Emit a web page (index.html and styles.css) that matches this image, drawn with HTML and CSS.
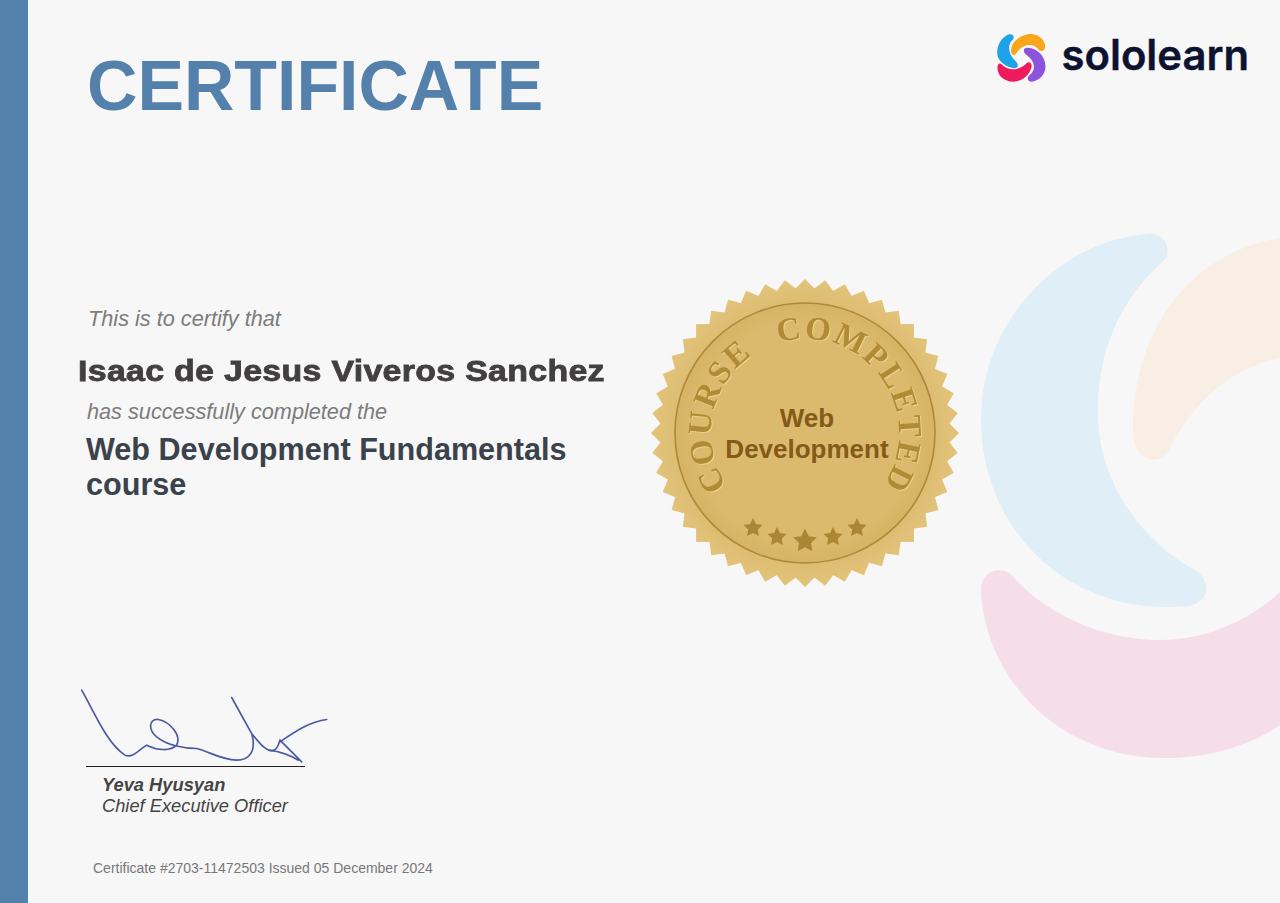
FILE: index.html
```html
<!DOCTYPE html>
<html lang="en">
<head>
<meta charset="utf-8">
<title>Certificate</title>
<link rel="stylesheet" href="styles.css">
</head>
<body>
<div class="page">
  <svg class="decor" viewBox="0 0 1280 903" aria-hidden="true">
    <path class="d-blue" d="M1148 234 C1162 232 1172 246 1166 258 C1160 266 1098 310 1098 412 C1098 490 1150 546 1195 570 C1212 580 1210 604 1188 606 C1070 618 981 530 981 420 C981 320 1060 240 1148 234 Z"/>
    <path class="d-orange" d="M1280 238 C1200 250 1133 320 1133 430 C1133 462 1160 468 1170 448 C1192 404 1232 366 1280 358 Z"/>
    <path class="d-pink" d="M981 590 C981 568 1006 564 1016 580 C1050 616 1104 640 1160 640 C1206 640 1250 620 1280 592 L1280 725 C1250 746 1208 758 1165 758 C1060 758 985 680 981 590 Z"/>
  </svg>
  <div class="bar"></div>
  <main class="main">
    <header class="header">
      <h1 class="title">CERTIFICATE</h1>
      <div class="logo">
        <svg class="logo-mark" viewBox="40 30 170 165" aria-hidden="true">
          <path class="p-blue" d="M88 43 C100 40 106 52 98 60 C84 72 82 98 106 122 C120 134 114 148 100 144 C70 138 52 118 52 98 C52 72 68 50 88 43 Z"/>
          <path class="p-orange" d="M94 96 C90 70 120 42 155 42 C180 44 197 62 196 82 C195 95 180 96 175 88 C165 70 130 68 112 96 C106 108 96 108 94 96 Z"/>
          <path class="p-purple" d="M143 83 C175 85 197 110 197 140 C197 165 175 183 155 185 C143 185 140 172 150 165 C168 150 168 125 140 105 C128 95 130 82 143 83 Z"/>
          <path class="p-pink" d="M65 133 C85 155 120 152 140 130 C148 122 158 130 155 142 C148 168 125 185 100 185 C72 185 52 165 53 143 C53 130 60 128 65 133 Z"/>
        </svg>
        <span class="logo-text">sololearn</span>
      </div>
    </header>
    <section class="middle">
      <div class="copy">
        <p class="lead">This is to certify that</p>
        <p class="name">Isaac de Jesus Viveros Sanchez</p>
        <p class="lead lead-2">has successfully completed the</p>
        <p class="course">Web Development Fundamentals course</p>
      </div>
      <svg class="seal" viewBox="0 0 310 310" role="img" aria-label="Course completed seal">
        <defs>
          <radialGradient id="teeth" gradientUnits="userSpaceOnUse" cx="155" cy="155" r="155">
            <stop offset="0.8" stop-color="#dcbb70"/>
            <stop offset="1" stop-color="#e2c47a"/>
          </radialGradient>
          <radialGradient id="disc" gradientUnits="userSpaceOnUse" cx="155" cy="155" r="130">
            <stop offset="0.85" stop-color="#dbba6d"/>
            <stop offset="1" stop-color="#d6b365"/>
          </radialGradient>
          <path id="arc" d="M155 249 A94 94 0 1 1 155 61 A94 94 0 1 1 155 249"/>
          <polygon id="star" points="0,-10 3,-3.9 9.5,-3.1 4.8,1.6 5.9,8.1 0,5 -5.9,8.1 -4.8,1.6 -9.5,-3.1 -3,-3.9"/>
          <rect id="sq" x="46.1" y="46.1" width="217.8" height="217.8"/>
        </defs>
        <g fill="url(#teeth)">
          <use href="#sq" transform="rotate(0 155 155)"/>
          <use href="#sq" transform="rotate(7.5 155 155)"/>
          <use href="#sq" transform="rotate(15 155 155)"/>
          <use href="#sq" transform="rotate(22.5 155 155)"/>
          <use href="#sq" transform="rotate(30 155 155)"/>
          <use href="#sq" transform="rotate(37.5 155 155)"/>
          <use href="#sq" transform="rotate(45 155 155)"/>
          <use href="#sq" transform="rotate(52.5 155 155)"/>
          <use href="#sq" transform="rotate(60 155 155)"/>
          <use href="#sq" transform="rotate(67.5 155 155)"/>
          <use href="#sq" transform="rotate(75 155 155)"/>
          <use href="#sq" transform="rotate(82.5 155 155)"/>
        </g>
        <circle class="seal-disc" cx="155" cy="155" r="130"/>
        <text class="seal-arc"><textPath href="#arc" startOffset="91">COURSE</textPath></text>
        <text class="seal-arc"><textPath href="#arc" startOffset="268">COMPLETED</textPath></text>
        <text class="seal-label" x="157" y="149">Web</text>
        <text class="seal-label" x="157" y="180">Development</text>
        <g class="seal-stars">
          <use href="#star" transform="translate(103 250)"/>
          <use href="#star" transform="translate(127 259)"/>
          <use href="#star" transform="translate(155 263) scale(1.25)"/>
          <use href="#star" transform="translate(183 259)"/>
          <use href="#star" transform="translate(207 250)"/>
        </g>
      </svg>
    </section>
    <footer class="footer">
      <svg class="signature" viewBox="0 -3 810 260" aria-hidden="true">
        <path d="M35 30 C70 90 110 190 165 225 C190 235 210 205 230 195 C260 210 300 215 320 195 C335 165 300 125 265 118 C235 115 235 150 260 170 C290 195 340 205 380 205 C420 215 450 238 500 240 C540 240 560 210 545 160 L485 52 M545 160 C565 185 585 210 605 212 C620 212 625 195 630 180 L695 245 M630 185 C680 150 720 125 770 118 M600 210 C630 215 660 225 685 240"/>
      </svg>
      <div class="signer">
        <p class="signer-name">Yeva Hyusyan</p>
        <p class="signer-role">Chief Executive Officer</p>
      </div>
      <p class="cert-id">Certificate #2703-11472503 Issued 05 December 2024</p>
    </footer>
  </main>
</div>
</body>
</html>
```
FILE: styles.css
```css
* { box-sizing: border-box; }
html, body { margin: 0; padding: 0; }
body { background: #f7f7f7; font-family: "Liberation Sans", Arial, sans-serif; }
p, h1 { margin: 0; }

.page {
  position: relative;
  display: flex;
  width: 1280px;
  height: 903px;
  overflow: hidden;
  background: #f7f7f7;
}
.decor { position: absolute; inset: 0; width: 1280px; height: 903px; }
.d-blue { fill: #e0eff7; }
.d-orange { fill: #f8eee3; }
.d-pink { fill: #f5dee7; }

.bar { width: 28px; flex: none; background: #5481ab; }
.main { position: relative; flex: 1; display: flex; flex-direction: column; padding-left: 60px; }

.header {
  display: flex;
  justify-content: space-between;
  align-items: flex-start;
  height: 278px;
  padding: 30px 31px 0 0;
}
.title {
  margin: 16px 0 0 -1px;
  font-size: 69.8px;
  line-height: 80px;
  font-weight: 700;
  color: #5481ab;
}
.logo { display: flex; align-items: center; gap: 12px; }
.logo-mark { width: 57px; height: 55px; display: block; }
.logo-text {
  margin-top: -6px;
  font-family: Inter, "Liberation Sans", sans-serif;
  font-weight: 600;
  font-size: 41.8px;
  line-height: 50px;
  color: #0c1230;
  -webkit-text-stroke: 0.4px #0c1230;
}
.p-blue { fill: #1ea3e8; }
.p-orange { fill: #f9a61a; }
.p-purple { fill: #8c54dc; }
.p-pink { fill: #ee1a5d; }

.middle { display: flex; align-items: flex-start; }
.copy { width: 562px; padding-top: 27px; }
.lead {
  font-style: italic;
  font-size: 21.7px;
  line-height: 28px;
  color: #7c7c7c;
}
.lead-2 { margin-top: 9px; margin-left: -1px; }
.name {
  margin: 20px 0 0 -10px;
  font-weight: 700;
  font-size: 29px;
  line-height: 36px;
  letter-spacing: 0.25px;
  color: #423f41;
  -webkit-text-stroke: 0.8px #423f41;
  white-space: nowrap;
  transform: scaleX(1.17);
  transform-origin: left center;
}
.course {
  margin: 6px 0 0 -2px;
  width: 520px;
  font-weight: 700;
  font-size: 30.6px;
  line-height: 35px;
  color: #3a424b;
}

.seal { width: 310px; height: 310px; flex: none; display: block; }
.seal-disc { fill: url(#disc); stroke: #ad8a38; stroke-width: 1.6; }
.seal-arc {
  font-family: "Liberation Serif", serif;
  font-weight: 700;
  font-size: 33px;
  letter-spacing: 2px;
  fill: #b08a35;
  filter: drop-shadow(1px 1px 0 #ecd28e);
}
.seal-label {
  font-family: "Liberation Sans", sans-serif;
  font-weight: 700;
  font-size: 26px;
  text-anchor: middle;
  fill: #85591a;
}
.seal-stars { fill: #ab8635; }

.footer { margin-top: auto; padding-bottom: 26px; }
.signature { display: block; width: 270px; height: 87px; margin-left: -18px; fill: none; stroke: #4b5aa0; stroke-width: 5; stroke-linecap: round; }
.signer {
  width: 219px;
  margin-left: -2px;
  padding: 7px 0 0 16px;
  border-top: 1px solid #222;
  font-style: italic;
  font-size: 18.3px;
  line-height: 21px;
  color: #444;
}
.signer-name { font-weight: 700; }
.cert-id { margin: 43px 0 0 5px; font-size: 14px; line-height: 18px; color: #777; }
```
